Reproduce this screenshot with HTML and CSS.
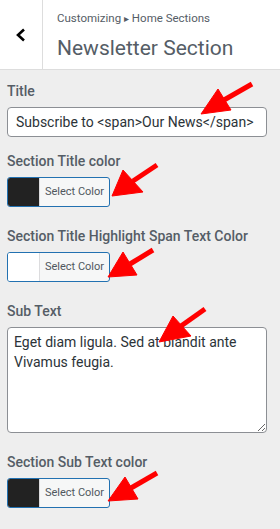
FILE: index.html
```html
<!DOCTYPE html>
<html lang="en">
<head>
    <meta charset="UTF-8">
    <meta name="viewport" content="width=device-width, initial-scale=1.0">
    <title>Newsletter Section</title>
    <link rel="stylesheet" href="styles.css">
</head>
<body>

    <div class="section-header">
        <button class="back-btn" aria-label="Back">
            <svg width="12" height="14" viewBox="0 0 12 14">
                <polyline points="9,1.5 3,7 9,12.5" fill="none" stroke="#000" stroke-width="2.6" />
            </svg>
        </button>
        <div class="section-title">
            <div class="crumb">Customizing <span class="sep">&#9656;</span> Home Sections</div>
            <div class="title">Newsletter Section</div>
        </div>
    </div>

    <div class="controls">
        <div class="control control-text">
            <label class="control-label">Title</label>
            <input type="text" class="text-input" value="Subscribe to <span>Our News</span>">
        </div>

        <div class="control">
            <label class="control-label">Section Title color</label>
            <button class="color-result">
                <span class="swatch dark"></span>
                <span class="color-text">Select Color</span>
            </button>
        </div>

        <div class="control">
            <label class="control-label">Section Title Highlight Span Text Color</label>
            <button class="color-result">
                <span class="swatch light"></span>
                <span class="color-text">Select Color</span>
            </button>
        </div>

        <div class="control">
            <label class="control-label">Sub Text</label>
            <textarea class="text-area">Eget diam ligula. Sed at blandit ante Vivamus feugia.</textarea>
        </div>

        <div class="control">
            <label class="control-label">Section Sub Text color</label>
            <button class="color-result">
                <span class="swatch dark"></span>
                <span class="color-text">Select Color</span>
            </button>
        </div>
    </div>

    <!-- red pointer arrows drawn over the screenshot -->
    <svg class="arrows" width="280" height="529" viewBox="0 0 280 529">
        <g fill="#f00" stroke="#f00" stroke-width="5">
            <line x1="252" y1="84" x2="224" y2="100" />
            <polygon points="201,114 218,89 231,110" stroke-width="1" />

            <line x1="157" y1="165" x2="133" y2="181" />
            <polygon points="112,196 123,170 143,192" stroke-width="1" />

            <line x1="153" y1="250" x2="130" y2="264" />
            <polygon points="108,277 123,252 137,275" stroke-width="1" />

            <line x1="205" y1="309" x2="181" y2="326" />
            <polygon points="159,342 173,316 191,336" stroke-width="1" />

            <line x1="157" y1="473" x2="131" y2="488" />
            <polygon points="108,501 125,477 138,499" stroke-width="1" />
        </g>
    </svg>

</body>
</html>
```

FILE: styles.css
```css
body {
    font-family: Roboto, "Liberation Sans", sans-serif;
    background-color: #eeeeee;
    margin: 0;
    width: 280px;
    height: 529px;
    position: relative;
    overflow: hidden;
    color: #555d66;
}

.section-header {
    display: flex;
    height: 69px;
    background-color: #fff;
    border-bottom: 1px solid #dddddd;
}

.back-btn {
    width: 43px;
    padding: 0;
    border: none;
    border-right: 1px solid #dddddd;
    background: #fff;
    display: flex;
    justify-content: center;
    align-items: center;
}

.back-btn svg {
    margin-left: -1px;
}

.section-title {
    padding: 10px 0 0 14px;
}

.crumb {
    font-size: 11.5px;
    line-height: 16px;
    color: #555d66;
}

.crumb .sep {
    font-size: 10px;
}

.title {
    font-size: 21px;
    font-weight: 400;
    line-height: 24px;
    margin-top: 9px;
    color: #555d66;
}

.controls {
    padding: 11px 0 0 7px;
}

.control {
    margin-bottom: 19px;
}

.control-text {
    margin-bottom: 14px;
}

.control-label {
    display: block;
    font-size: 14px;
    font-weight: 500;
    line-height: 21px;
    margin-bottom: 5px;
    color: #555d66;
}

.text-input,
.text-area {
    box-sizing: border-box;
    display: block;
    width: 260px;
    border: 1px solid #8c8f94;
    border-radius: 4px;
    background-color: #fff;
    font-family: Roboto, "Liberation Sans", sans-serif;
    font-size: 14px;
    color: #2c3338;
    margin: 0;
}

.text-input {
    height: 30px;
    padding: 0 8px;
}

.text-area {
    height: 106px;
    padding: 4px 6px;
    line-height: 20px;
    resize: vertical;
}

.color-result {
    display: flex;
    width: 103px;
    height: 30px;
    padding: 0;
    border: 1px solid #2271b1;
    border-radius: 3px;
    overflow: hidden;
    background-color: #f6f7f7;
    cursor: pointer;
}

.swatch {
    width: 31px;
    height: 100%;
    border-right: 1px solid #dcdcde;
}

.swatch.dark {
    background-color: #222222;
}

.swatch.light {
    background-color: #ffffff;
}

.color-text {
    flex: 1;
    line-height: 28px;
    font-size: 11px;
    color: #50575e;
    font-family: Roboto, "Liberation Sans", sans-serif;
    text-align: center;
}

.arrows {
    position: absolute;
    top: 0;
    left: 0;
    pointer-events: none;
}
```
